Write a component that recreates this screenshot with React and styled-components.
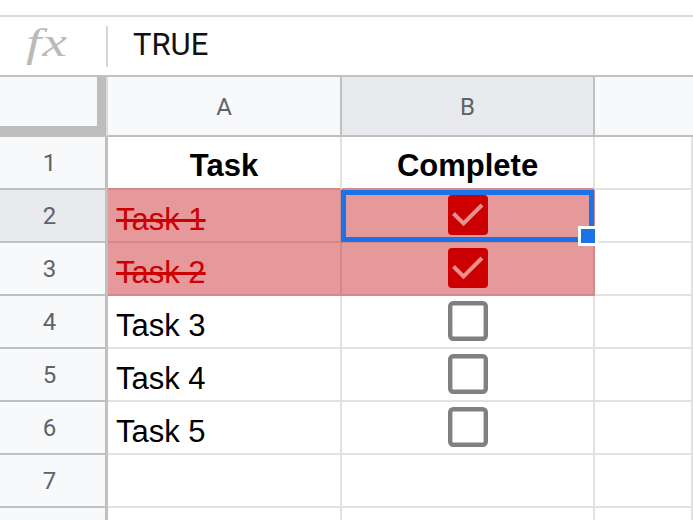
import React from "react";
import styled, { createGlobalStyle } from "styled-components";

const GlobalStyle = createGlobalStyle`
  html, body { margin: 0; padding: 0; background: #ffffff; }
  body { font-family: "Liberation Sans", Arial, sans-serif; }
  * { box-sizing: border-box; }
`;

const Page = styled.div`
  width: 693px;
  height: 520px;
  overflow: hidden;
  background: #ffffff;
  padding-top: 15px;
`;

const FormulaBar = styled.div`
  display: flex;
  align-items: center;
  height: 62px;
  border-top: 2px solid #dadce0;
  border-bottom: 2px solid #c2c2c2;
  padding-left: 26px;
`;

const Fx = styled.div`
  width: 80px;
  font-family: "Liberation Serif", "Times New Roman", serif;
  font-style: italic;
  font-size: 39px;
  color: #bababa;
  line-height: 1;
  letter-spacing: 1px;
  margin-top: -8px;
  transform: scaleX(1.4);
  transform-origin: left center;
`;

const Divider = styled.div`
  width: 2px;
  height: 41px;
  background: #d6d6d6;
`;

const FormulaValue = styled.div`
  padding-left: 25px;
  font-family: Roboto, "Liberation Sans", sans-serif;
  font-size: 31px;
  color: #111111;
  margin-top: -3px;
`;

const Grid = styled.div`
  display: grid;
  grid-template-columns: 108px 234px 253px 1fr;
  grid-template-rows: 60px;
  grid-auto-rows: 53px;
`;

const Corner = styled.div`
  background: #f8f9fa;
  border-right: 2px solid #dcdcdc;
  border-bottom: 2px solid #c0c0c0;
  box-shadow: inset -9px -9px 0 #bdbdbd;
`;

const ColHeader = styled.div`
  display: flex;
  align-items: center;
  justify-content: center;
  padding-top: 1px;
  background: ${(p) => (p.$active ? "#e8eaed" : "#f8f9fa")};
  border-bottom: 2px solid #c0c0c0;
  border-right: ${(p) => (p.$last ? "none" : "2px solid #c0c0c0")};
  font-family: Roboto, "Liberation Sans", sans-serif;
  font-size: 24px;
  color: #5f6368;
`;

const RowHeader = styled.div`
  display: flex;
  align-items: center;
  justify-content: center;
  padding-right: 6px;
  background: ${(p) => (p.$active ? "#e8eaed" : "#f8f9fa")};
  border-right: 3px solid #c0c0c0;
  border-bottom: 2px solid #c0c0c0;
  font-family: Roboto, "Liberation Sans", sans-serif;
  font-size: 24px;
  color: #5f6368;
`;

const Cell = styled.div`
  position: relative;
  display: flex;
  align-items: ${(p) => (p.$center ? "center" : "flex-end")};
  justify-content: ${(p) => (p.$center || p.$bold ? "center" : "flex-start")};
  padding: ${(p) =>
    p.$center ? "0 0 1px 0" : p.$bold ? "0 8px 4px 8px" : "0 8px 3px 8px"};
  background: ${(p) => (p.$done ? "#e6999a" : "#ffffff")};
  border-right: 2px solid ${(p) => (p.$done ? "#d08a8b" : "#e2e2e2")};
  border-bottom: 2px solid
    ${(p) => (p.$done || p.$pinkEdge ? "#d08a8b" : "#e2e2e2")};
  font-family: "Liberation Sans", Arial, sans-serif;
  font-size: 31px;
  line-height: 36px;
  font-weight: ${(p) => (p.$bold ? 700 : 400)};
  color: ${(p) => (p.$done ? "#cc0000" : "#000000")};
  text-decoration: ${(p) => (p.$done && !p.$center ? "line-through" : "none")};
  white-space: nowrap;
`;

const Selection = styled.div`
  position: absolute;
  top: 0;
  left: -1px;
  right: -1px;
  bottom: -1px;
  border: 5px solid #1a73e8;
  z-index: 2;
  pointer-events: none;
`;

const Handle = styled.div`
  position: absolute;
  right: -9px;
  bottom: -9px;
  width: 20px;
  height: 20px;
  background: #1a73e8;
  border: 3px solid #ffffff;
  z-index: 3;
`;

function CheckBox({ checked }) {
  return (
    <svg width="40" height="40" viewBox="0 0 40 40">
      {checked ? (
        <>
          <rect x="0" y="0" width="40" height="40" rx="4" fill="#cc0000" />
          <polyline
            points="5.5,18.5 15.5,28.5 34,10"
            fill="none"
            stroke="#e88f90"
            strokeWidth="4"
          />
        </>
      ) : (
        <rect
          x="2.2"
          y="2.2"
          width="35.6"
          height="35.6"
          rx="3"
          fill="#ffffff"
          stroke="#808080"
          strokeWidth="4.4"
        />
      )}
    </svg>
  );
}

const tasks = [
  { name: "Task 1", done: true },
  { name: "Task 2", done: true },
  { name: "Task 3", done: false },
  { name: "Task 4", done: false },
  { name: "Task 5", done: false },
];

export default function App() {
  return (
    <>
      <GlobalStyle />
      <Page>
        <FormulaBar>
          <Fx>fx</Fx>
          <Divider />
          <FormulaValue>TRUE</FormulaValue>
        </FormulaBar>
        <Grid>
          <Corner />
          <ColHeader>A</ColHeader>
          <ColHeader $active>B</ColHeader>
          <ColHeader $last />

          <RowHeader>1</RowHeader>
          <Cell $bold $pinkEdge>Task</Cell>
          <Cell $bold $pinkEdge>Complete</Cell>
          <Cell />

          {tasks.map((t, i) => (
            <React.Fragment key={t.name}>
              <RowHeader $active={i === 0}>{i + 2}</RowHeader>
              <Cell $done={t.done}>{t.name}</Cell>
              <Cell $done={t.done} $center>
                <CheckBox checked={t.done} />
                {i === 0 && (
                  <Selection>
                    <Handle />
                  </Selection>
                )}
              </Cell>
              <Cell />
            </React.Fragment>
          ))}

          <RowHeader>7</RowHeader>
          <Cell />
          <Cell />
          <Cell />

          <RowHeader />
          <Cell />
          <Cell />
          <Cell />
        </Grid>
      </Page>
    </>
  );
}
